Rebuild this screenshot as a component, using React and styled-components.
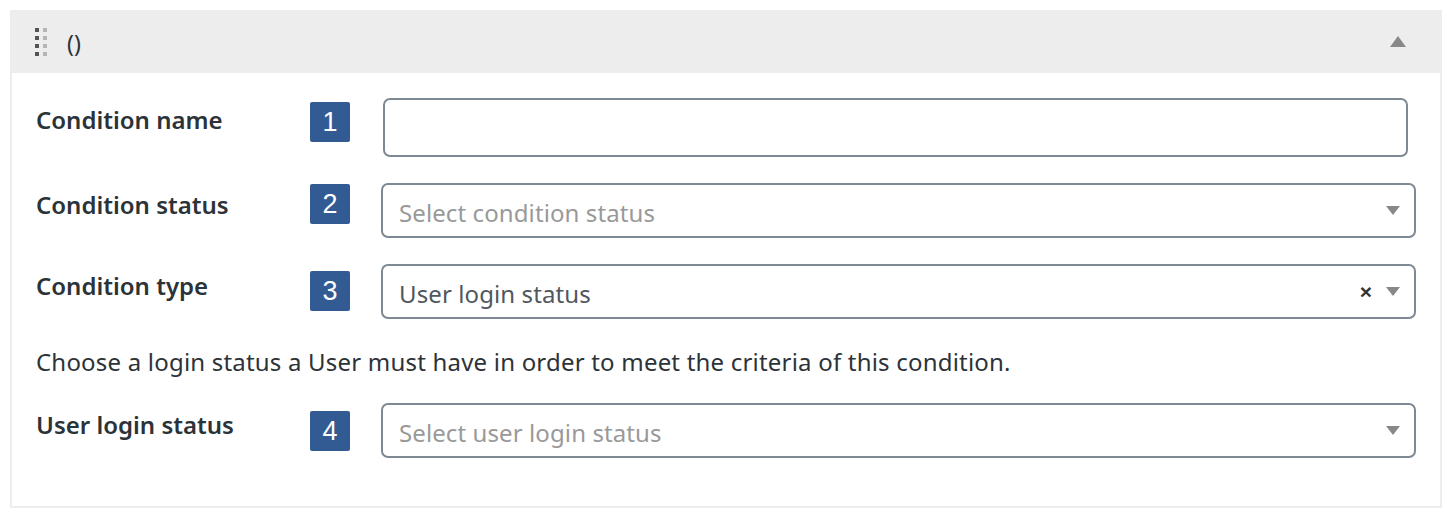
import React from "react";
import styled, { createGlobalStyle } from "styled-components";

const Global = createGlobalStyle`
  html, body { margin: 0; padding: 0; background: #fff; }
  body { font-family: "Noto Sans", "Open Sans", sans-serif; color: #2c3338; }
  * { box-sizing: border-box; }
`;

const Page = styled.div`
  padding: 10px 8px 10px 10px;
  width: 1450px;
  height: 518px;
`;

const Panel = styled.section`
  width: 1432px;
  border: 2px solid #ededed;
  border-top: none;
  background: #fff;
`;

const Header = styled.header`
  height: 63px;
  margin: 0 -2px;
  background: #ededed;
  display: flex;
  align-items: center;
  padding: 0 36px 0 25px;
`;

const Grip = styled.div`
  display: grid;
  grid-template-columns: 4px 4px;
  grid-auto-rows: 4px;
  column-gap: 4px;
  row-gap: 4px;
  margin-right: 20px;
`;

const Dot = styled.span`
  background: ${(p) => (p.$light ? "#b5b5b5" : "#555")};
`;

const Title = styled.span`
  font-size: 23px;
  color: #2c3338;
  flex: 1;
  padding-top: 2px;
`;

const Toggle = styled.span`
  width: 0;
  height: 0;
  border-left: 8px solid transparent;
  border-right: 8px solid transparent;
  border-bottom: 11px solid #888;
`;

const Body = styled.div`
  padding: 25px 0 48px 24px;
  display: flex;
  flex-direction: column;
`;

const Row = styled.div`
  display: flex;
  align-items: flex-start;
  margin-top: ${(p) => p.$mt || 0}px;
`;

const Label = styled.div`
  width: 274px;
  font-size: 24px;
  font-weight: 600;
  color: #2c3338;
  padding-top: 7px;
  line-height: 30px;
  white-space: nowrap;
`;

const Badge = styled.div`
  width: 40px;
  height: 40px;
  border-radius: 2px;
  background: #335b93;
  color: #fff;
  font-family: "Liberation Sans", Arial, sans-serif;
  font-size: 27px;
  display: flex;
  align-items: center;
  justify-content: center;
  margin-top: ${(p) => p.$mt || 0}px;
  margin-right: ${(p) => p.$mr || 31}px;
`;

const TextInput = styled.div`
  width: 1025px;
  height: 59px;
  border: 2px solid #7e8993;
  border-radius: 7px;
  background: #fff;
`;

const Select = styled.div`
  width: 1035px;
  height: 55px;
  border: 2px solid #7e8993;
  border-radius: 7px;
  background: #fff;
  display: flex;
  align-items: center;
  padding: 0 14px 0 16px;
  font-size: 24px;
  color: ${(p) => (p.$placeholder ? "#999" : "#50575e")};
`;

const Value = styled.span`
  flex: 1;
  padding-top: 3px;
  white-space: nowrap;
  letter-spacing: 0.1px;
`;

const Clear = styled.span`
  font-family: "Liberation Sans", Arial, sans-serif;
  font-weight: 700;
  font-size: 21px;
  color: #333;
  margin-right: 14px;
  line-height: 1;
`;

const Caret = styled.span`
  width: 0;
  height: 0;
  border-left: 7px solid transparent;
  border-right: 7px solid transparent;
  border-top: 9px solid #888;
`;

const Description = styled.p`
  margin: 28px 0 0;
  font-size: 24px;
  line-height: 30px;
  color: #2c3338;
  white-space: nowrap;
  letter-spacing: 0.2px;
`;

export default function App() {
  const dots = [0, 1, 2, 3];
  return (
    <Page>
      <Global />
      <Panel>
        <Header>
          <Grip>
            {dots.map((i) => (
              <React.Fragment key={i}>
                <Dot />
                <Dot $light />
              </React.Fragment>
            ))}
          </Grip>
          <Title>()</Title>
          <Toggle />
        </Header>
        <Body>
          <Row>
            <Label>Condition name</Label>
            <Badge $mt={4} $mr={33}>1</Badge>
            <TextInput />
          </Row>
          <Row $mt={26}>
            <Label>Condition status</Label>
            <Badge $mt={1}>2</Badge>
            <Select $placeholder>
              <Value>Select condition status</Value>
              <Caret />
            </Select>
          </Row>
          <Row $mt={26}>
            <Label>Condition type</Label>
            <Badge $mt={7}>3</Badge>
            <Select>
              <Value>User login status</Value>
              <Clear>×</Clear>
              <Caret />
            </Select>
          </Row>
          <Description>
            Choose a login status a User must have in order to meet the criteria of this condition.
          </Description>
          <Row $mt={26}>
            <Label>User login status</Label>
            <Badge $mt={8}>4</Badge>
            <Select $placeholder>
              <Value>Select user login status</Value>
              <Caret />
            </Select>
          </Row>
        </Body>
      </Panel>
    </Page>
  );
}
